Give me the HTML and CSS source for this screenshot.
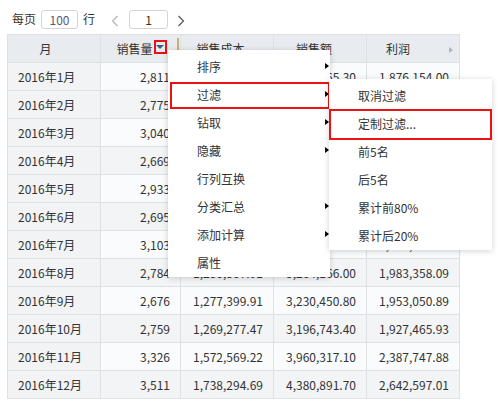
FILE: index.html
```html
<!DOCTYPE html>
<html lang="zh">
<head>
<meta charset="utf-8">
<title>销售报表</title>
<link rel="stylesheet" href="styles.css">
</head>
<body>
<div class="toolbar">
  <span class="label">每页</span>
  <span class="page-input size">100</span>
  <span class="label">行</span>
  <span class="chev prev"><svg width="8" height="12" viewBox="0 0 8 12"><polyline points="6.5,1 1.5,6 6.5,11" fill="none" stroke="#b4b4b4" stroke-width="1.2"/></svg></span>
  <span class="page-input num">1</span>
  <span class="chev next"><svg width="8" height="12" viewBox="0 0 8 12"><polyline points="1.5,1 6.5,6 1.5,11" fill="none" stroke="#555" stroke-width="1.2"/></svg></span>
</div>

<div class="grid">
  <div class="row head">
    <div class="c h h1">月</div>
    <div class="c h h2">销售量<span class="dd"><span class="tri"></span></span><span class="resize"></span></div>
    <div class="c h h3">销售成本</div>
    <div class="c h h4">销售额</div>
    <div class="c h h5">利润<span class="scroll-arrow"></span></div>
  </div>
  <div class="row odd"><div class="c m">2016年1月</div><div class="c">2,811</div><div class="c">1,226,111.30</div><div class="c">3,102,265.30</div><div class="c">1,876,154.00</div></div>
  <div class="row even"><div class="c m">2016年2月</div><div class="c">2,775</div><div class="c">1,255,830.42</div><div class="c">3,218,640.20</div><div class="c">1,962,809.78</div></div>
  <div class="row odd"><div class="c m">2016年3月</div><div class="c">3,040</div><div class="c">1,398,214.65</div><div class="c">3,529,108.50</div><div class="c">2,130,893.85</div></div>
  <div class="row even"><div class="c m">2016年4月</div><div class="c">2,669</div><div class="c">1,240,570.18</div><div class="c">3,161,932.60</div><div class="c">1,921,362.42</div></div>
  <div class="row odd"><div class="c m">2016年5月</div><div class="c">2,933</div><div class="c">1,352,917.04</div><div class="c">3,424,786.90</div><div class="c">2,071,869.86</div></div>
  <div class="row even"><div class="c m">2016年6月</div><div class="c">2,695</div><div class="c">1,263,480.77</div><div class="c">3,190,245.10</div><div class="c">1,926,764.33</div></div>
  <div class="row odd"><div class="c m">2016年7月</div><div class="c">3,103</div><div class="c">1,420,663.51</div><div class="c">3,611,372.40</div><div class="c">2,190,708.89</div></div>
  <div class="row even"><div class="c m">2016年8月</div><div class="c">2,784</div><div class="c">1,280,807.91</div><div class="c">3,264,166.00</div><div class="c">1,983,358.09</div></div>
  <div class="row odd"><div class="c m">2016年9月</div><div class="c">2,676</div><div class="c">1,277,399.91</div><div class="c">3,230,450.80</div><div class="c">1,953,050.89</div></div>
  <div class="row even"><div class="c m">2016年10月</div><div class="c">2,759</div><div class="c">1,269,277.47</div><div class="c">3,196,743.40</div><div class="c">1,927,465.93</div></div>
  <div class="row odd"><div class="c m">2016年11月</div><div class="c">3,326</div><div class="c">1,572,569.22</div><div class="c">3,960,317.10</div><div class="c">2,387,747.88</div></div>
  <div class="row even"><div class="c m">2016年12月</div><div class="c">3,511</div><div class="c">1,738,294.69</div><div class="c">4,380,891.70</div><div class="c">2,642,597.01</div></div>
</div>

<div class="menu main-menu">
  <div class="item sub">排序</div>
  <div class="item sub marked">过滤</div>
  <div class="item sub">钻取</div>
  <div class="item sub">隐藏</div>
  <div class="item">行列互换</div>
  <div class="item sub">分类汇总</div>
  <div class="item sub">添加计算</div>
  <div class="item">属性</div>
</div>

<div class="menu sub-menu">
  <div class="item">取消过滤</div>
  <div class="item marked">定制过滤...</div>
  <div class="item">前5名</div>
  <div class="item">后5名</div>
  <div class="item">累计前80%</div>
  <div class="item">累计后20%</div>
</div>
</body>
</html>
```

FILE: styles.css
```css
html, body {
  margin: 0;
  padding: 0;
}
body {
  position: relative;
  width: 499px;
  height: 412px;
  background: #fff;
  font-family: "Noto Sans CJK SC", "Noto Sans", sans-serif;
  font-size: 12px;
  color: #333;
  overflow: hidden;
}

/* toolbar */
.toolbar {
  display: flex;
  align-items: center;
  height: 20px;
  padding: 9px 0 5px 12px;
}
.label {
  line-height: 20px;
}
.page-input {
  box-sizing: border-box;
  height: 19px;
  border: 1px solid #d4d4d4;
  border-radius: 3px;
  text-align: center;
  line-height: 17px;
  background: #fff;
}
.page-input.size {
  width: 37px;
  margin: 0 5px 0 5px;
  color: #595972;
}
.page-input.num {
  width: 39px;
  margin-left: 10px;
  color: #3a3320;
}
.chev {
  display: flex;
  height: 12px;
  margin-top: 3px;
}
.chev.prev {
  margin-left: 16px;
}
.chev.next {
  margin-left: 9px;
}

/* grid table */
.grid {
  display: grid;
  grid-template-columns: 93px 80px 93px 93px 93px;
  grid-auto-rows: 28px;
  width: max-content;
  margin-left: 7px;
  border-left: 1px solid #dde1e6;
  border-top: 1px solid #dde1e6;
}
.row {
  display: contents;
}
.c {
  box-sizing: border-box;
  border-right: 1px solid #dde1e6;
  border-bottom: 1px solid #dde1e6;
  padding: 0 10px;
  line-height: 27px;
  text-align: right;
  white-space: nowrap;
  overflow: hidden;
}
.row.odd .c {
  background: #fafbfc;
}
.row.even .c {
  background: #f2f4f6;
}
.row .c.m {
  background: #f1f3f5;
  text-align: left;
}
.head .c.h {
  background: #e8ebef;
  display: flex;
  align-items: center;
  justify-content: center;
  position: relative;
  overflow: visible;
  padding: 0;
}
.h1 { padding-right: 17px !important; }
.h2 { padding-left: 2px !important; }
.h3 { padding-right: 13px !important; }
.h4 { padding-right: 12px !important; }
.h5 { padding-right: 30px !important; }

.dd {
  box-sizing: border-box;
  width: 13px;
  height: 14px;
  border: 2px solid #ee1111;
  margin-left: 1px;
  margin-top: -4px;
  display: flex;
  justify-content: center;
  align-items: center;
}
.tri {
  width: 0;
  height: 0;
  border-left: 4px solid transparent;
  border-right: 4px solid transparent;
  border-top: 4px solid #3a5c7e;
  margin-top: 1px;
}
.resize {
  position: absolute;
  right: 1px;
  top: 3px;
  width: 2px;
  height: 12px;
  background: #c8b26c;
}
.scroll-arrow {
  position: absolute;
  right: 6px;
  top: 12px;
  width: 0;
  height: 0;
  border-left: 4px solid #b0b4b8;
  border-top: 3px solid transparent;
  border-bottom: 3px solid transparent;
}

/* menus */
.menu {
  position: absolute;
  background: #fff;
  box-shadow: 0 1px 6px rgba(0, 0, 0, 0.18);
  padding-top: 3px;
}
.main-menu {
  left: 168px;
  top: 50px;
  width: 162px;
  z-index: 2;
}
.sub-menu {
  left: 329px;
  top: 79px;
  width: 163px;
  z-index: 3;
}
.item {
  position: relative;
  height: 28px;
  line-height: 28px;
  padding-left: 29px;
  white-space: nowrap;
}
.item.sub::before {
  content: "";
  position: absolute;
  right: 1px;
  top: 10px;
  width: 0;
  height: 0;
  border-left: 4px solid #000;
  border-top: 3px solid transparent;
  border-bottom: 3px solid transparent;
}
.main-menu .item.marked::after {
  content: "";
  position: absolute;
  left: 2px;
  right: 0;
  top: 1px;
  bottom: 0;
  border: 2px solid #ee1111;
}
.sub-menu .item.marked::after {
  content: "";
  position: absolute;
  left: 0;
  right: 0;
  top: -1px;
  bottom: -2px;
  border: 2px solid #ee1111;
}
```
